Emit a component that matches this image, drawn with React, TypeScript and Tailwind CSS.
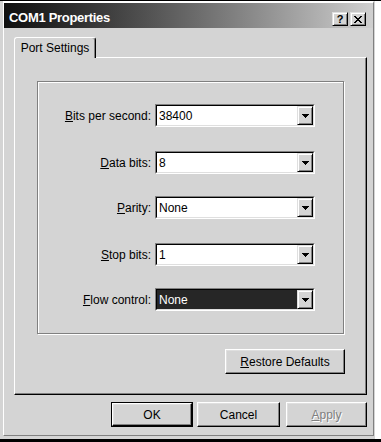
import React from "react";

// classic 3D bevels
const raised =
  "border border-t-white border-l-white border-r-black border-b-black shadow-[inset_-1px_-1px_0_#808080,inset_1px_1px_0_#dfdfdf]";
const capBtn =
  "w-[16px] h-[14px] bg-[#d4d4d4] flex items-center justify-center border border-t-[#dfdfdf] border-l-[#dfdfdf] border-r-black border-b-black shadow-[inset_1px_1px_0_#fff,inset_-1px_-1px_0_#808080]";

function Arrow() {
  return (
    <svg width="7" height="4" viewBox="0 0 7 4" shapeRendering="crispEdges">
      <rect x="0" y="0" width="7" height="1" fill="#000" />
      <rect x="1" y="1" width="5" height="1" fill="#000" />
      <rect x="2" y="2" width="3" height="1" fill="#000" />
      <rect x="3" y="3" width="1" height="1" fill="#000" />
    </svg>
  );
}

function CloseGlyph() {
  const px: Array<[number, number, number]> = [
    [0, 0, 2], [6, 0, 2], [1, 1, 2], [5, 1, 2], [2, 2, 4], [3, 3, 2],
    [2, 4, 4], [1, 5, 2], [5, 5, 2], [0, 6, 2], [6, 6, 2],
  ];
  return (
    <svg width="8" height="7" viewBox="0 0 8 7" shapeRendering="crispEdges">
      {px.map(([x, y, w], i) => (
        <rect key={i} x={x} y={y} width={w} height="1" fill="#000" />
      ))}
    </svg>
  );
}

function Combo({ value, selected }: { value: string; selected?: boolean }) {
  return (
    <div className="w-[160px] h-[23px] border border-t-[#808080] border-l-[#808080] border-r-white border-b-white">
      <div className="h-full flex bg-white border border-t-black border-l-black border-r-[#dfdfdf] border-b-[#dfdfdf]">
        <div
          className={`flex-1 flex items-center pl-[2px] text-[12px] ${
            selected ? "bg-[#262626] text-white" : "text-black"
          }`}
        >
          {value}
        </div>
        <div className="w-[16px] h-full flex items-center justify-center bg-[#d4d4d4] border border-t-[#dfdfdf] border-l-[#dfdfdf] border-r-black border-b-black shadow-[inset_1px_1px_0_#fff,inset_-1px_-1px_0_#808080]">
          <Arrow />
        </div>
      </div>
    </div>
  );
}

const ROWS: Array<{ key: string; u: string; rest: string; value: string; mt: string; selected?: boolean }> = [
  { key: "bits", u: "B", rest: "its per second:", value: "38400", mt: "mt-[22px]" },
  { key: "data", u: "D", rest: "ata bits:", value: "8", mt: "mt-[24px]" },
  { key: "parity", u: "P", rest: "arity:", value: "None", mt: "mt-[22px]" },
  { key: "stop", u: "S", rest: "top bits:", value: "1", mt: "mt-[24px]" },
  { key: "flow", u: "F", rest: "low control:", value: "None", mt: "mt-[22px]", selected: true },
];

export default function App() {
  return (
    <div className="w-[381px] h-[442px] bg-white flex flex-col font-['Liberation_Sans',Arial,sans-serif] text-black select-none">
      <div className="h-px bg-black" />
      <div className="h-[438px] w-[375px] bg-[#d4d4d4] pl-[3px] pr-px pb-[3px] flex">
        <div className="flex-1 flex flex-col border-t-2 border-l border-t-white border-l-white border-r border-b border-r-[#808080] border-b-[#808080]">
          {/* title bar */}
          <div className="h-[25px] flex items-start pr-[7px] bg-linear-to-r from-[#101010] to-[#d0d0d0]">
            <div className="flex-1 mt-[7px] pl-[5px] text-[13px] leading-[16px] font-bold tracking-[-0.3px] text-white">
              COM1 Properties
            </div>
            <div className="mt-[9px] flex gap-[2px]">
              <div className={capBtn}>
                <span className="text-[11px] leading-none font-bold">?</span>
              </div>
              <div className={capBtn}>
                <CloseGlyph />
              </div>
            </div>
          </div>

          {/* tab */}
          <div className="mt-[9px] ml-[10px] relative z-10 w-[82px] h-[21px] bg-[#d4d4d4] flex items-center justify-center text-[12px] rounded-t-[3px] border-t border-l border-r border-t-white border-l-white border-r-black shadow-[inset_-1px_0_0_#808080]">
            Port Settings
          </div>

          {/* tab page */}
          <div className="-mt-px ml-[10px] w-[353px] h-[338px] flex flex-col pl-[22px] pt-[23px] border border-t-white border-l-white border-r-black border-b-black shadow-[inset_-1px_-1px_0_#808080]">
            <div className="w-[307px] h-[253px] flex flex-col border border-[#808080] shadow-[inset_1px_1px_0_#fff,1px_1px_0_#fff]">
              {ROWS.map((r) => (
                <div key={r.key} className={`flex items-center ${r.mt}`}>
                  <div className="w-[113px] text-right text-[12px]">
                    <u className="underline-offset-[1px]">{r.u}</u>
                    {r.rest}
                  </div>
                  <div className="ml-[4px]">
                    <Combo value={r.value} selected={r.selected} />
                  </div>
                </div>
              ))}
            </div>
            <button
              className={`mt-[15px] ml-[188px] w-[120px] h-[25px] bg-[#d4d4d4] text-[12px] flex items-center justify-center ${raised}`}
            >
              <u className="underline-offset-[1px]">R</u>estore Defaults
            </button>
          </div>

          {/* dialog buttons */}
          <div className="mt-[7px] pr-[6px] flex justify-end text-[12px]">
            <div className="w-[82px] h-[25px] border border-black">
              <button className={`w-full h-full bg-[#d4d4d4] flex items-center justify-center ${raised}`}>OK</button>
            </div>
            <button className={`ml-[4px] w-[83px] h-[25px] bg-[#d4d4d4] flex items-center justify-center ${raised}`}>
              Cancel
            </button>
            <button
              className={`ml-[6px] w-[81px] h-[25px] bg-[#d4d4d4] flex items-center justify-center text-[#808080] [text-shadow:1px_1px_0_#fff] ${raised}`}
            >
              <u className="underline-offset-[1px]">A</u>pply
            </button>
          </div>
        </div>
      </div>
      <div className="h-[3px] bg-black" />
    </div>
  );
}
